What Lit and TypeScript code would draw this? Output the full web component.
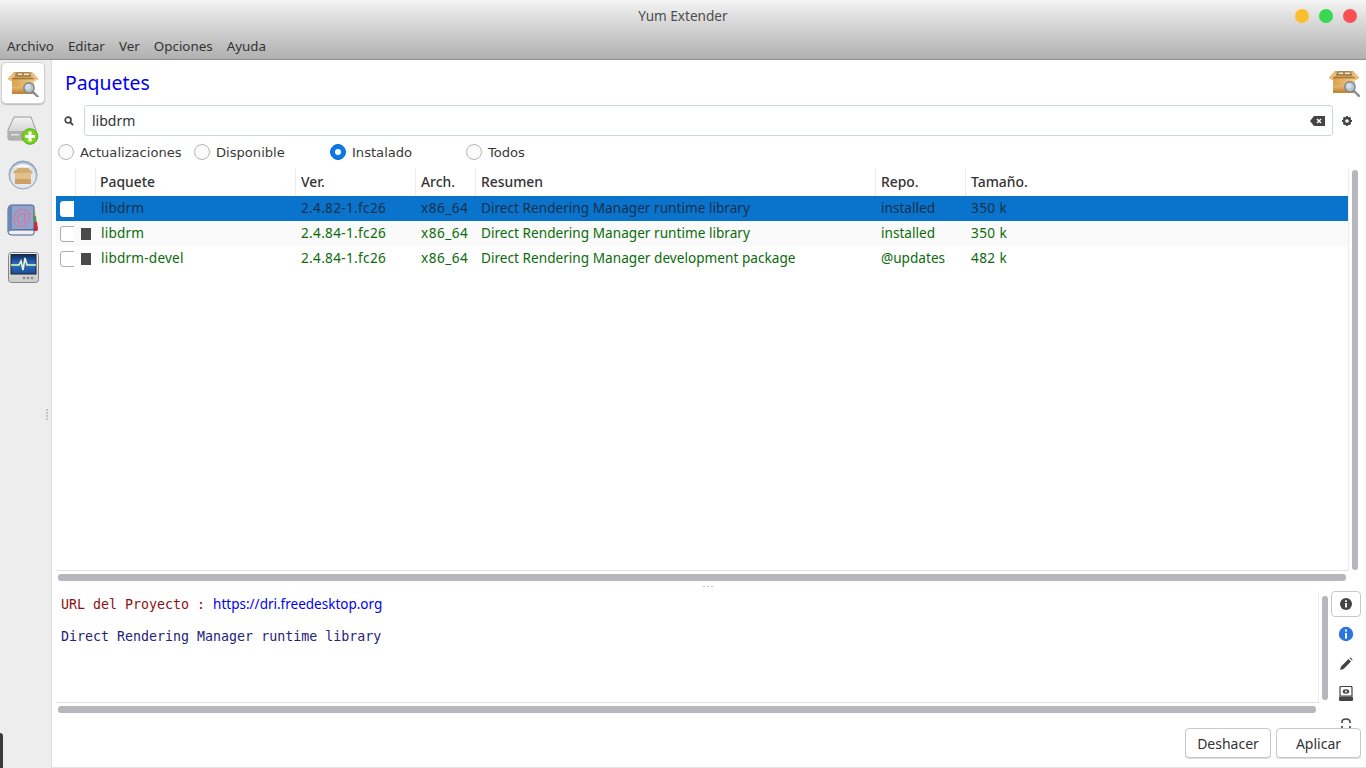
import { LitElement, html, css, svg } from "lit";
import { customElement } from "lit/decorators.js";

const box = (id: string, w: number, lens = true) => html`<svg width=${w} height=${w * 0.9} viewBox="0 0 32 29">
  <defs>
    <linearGradient id="b${id}" x1="0" y1="0" x2="0" y2="1"><stop offset="0" stop-color="#e8bb72"/><stop offset="1" stop-color="#b97c2a"/></linearGradient>
    <linearGradient id="f${id}" x1="0" y1="0" x2="1" y2="0"><stop offset="0" stop-color="#d9a04e"/><stop offset="1" stop-color="#f0cc8a"/></linearGradient>
  </defs>
  <path d="M7 3 L25 3 L31.5 10 L27 12 L5 12 L.5 10Z" fill="#d3a45e"/>
  <path d="M10 3 H22 L25 8 H7Z" fill="#a88755"/>
  <path d="M11 4.5 h4 v1.6 h-4z M17 4.5 h5 v1.6 h-5z" fill="#f2e6cf"/>
  <path d="M.5 10 L7 3 L8 7 L4 12Z M31.5 10 L25 3 L24 7 L28 12Z" fill="#e8bf7c"/>
  <rect x="5" y="9" width="22" height="16" fill="url(#f${id})"/>
  <rect x="5" y="18" width="22" height="7" fill="url(#b${id})"/>
  <rect x="5" y="9" width="22" height="1.4" fill="#a8742e"/>
  ${lens ? svg`<path d="M25 22 L31 28" stroke="#8a8f96" stroke-width="2.4" stroke-linecap="round"/>
  <circle cx="22" cy="19" r="5.2" fill="#b8c4d0" stroke="#7d858e" stroke-width="1.4"/>
  <circle cx="21" cy="18" r="2.8" fill="#d5dde6"/>` : ""}
</svg>`;

const disk = html`<svg width="32" height="31" viewBox="0 0 32 31">
  <defs>
    <linearGradient id="dk" x1="0" y1="0" x2="0" y2="1"><stop offset="0" stop-color="#f2f2f2"/><stop offset="1" stop-color="#c4c4c4"/></linearGradient>
  </defs>
  <path d="M7 3 H24 L29 16 V24 Q29 26 27 26 H3 Q1 26 1 24 V16Z" fill="url(#dk)" stroke="#9a9a9a"/>
  <rect x="1.5" y="17" width="27" height="8.5" rx="1.5" fill="#b0b0b0"/>
  <rect x="4" y="20" width="8" height="1.5" fill="#e6e6e6"/>
  <circle cx="23" cy="22.5" r="7.8" fill="#76d21b" stroke="#5cb012"/>
  <path d="M23 17.5 V27.5 M18 22.5 H28" stroke="#fff" stroke-width="3.2"/>
</svg>`;

const globe = html`<svg width="30" height="30" viewBox="0 0 30 30">
  <defs>
    <radialGradient id="gl" cx=".5" cy=".55" r=".55"><stop offset="0" stop-color="#f6f6f8"/><stop offset=".78" stop-color="#dfe4ea"/><stop offset="1" stop-color="#7f95b8"/></radialGradient>
  </defs>
  <circle cx="15" cy="15" r="14" fill="url(#gl)" stroke="#8fa1bc"/>
  <path d="M5 12 L10 8 H20 L25 12 L23 14 H7Z" fill="#d4ab70"/>
  <rect x="7" y="13" width="16" height="11" fill="#e3c08a"/>
  <rect x="7" y="19" width="16" height="5" fill="#cda165"/>
  <path d="M5 8 Q15 1 25 8 Q15 5 5 8Z" fill="#fff" opacity=".85"/>
</svg>`;

const book = html`<svg width="34" height="34" viewBox="0 0 34 34">
  <path d="M26 6 h3 l1 10 h-3z" fill="#d9c23b"/>
  <path d="M27 12 h3 l1 8 h-3z" fill="#5aa13a"/>
  <path d="M27 18 h4 l1 7 q0 2-2 2 h-3z" fill="#d8262c"/>
  <path d="M6 1 H26 Q28 1 28 3 V24 Q28 26 26 26 H6 L2 28 V6 Q2 1 6 1Z" fill="#8fa5cf" stroke="#4c5f8e"/>
  <path d="M2 28 Q2 26 6 26 H28 V29 Q28 31 26 31 H6 Q2 31 2 28Z" fill="#eef0f4" stroke="#4c5f8e"/>
  <path d="M2 6 Q2 1 6 1 V26 L2 28Z" fill="#6f86b6"/>
  <text x="16.5" y="20" text-anchor="middle" class="at">@</text>
</svg>`;

const monitor = html`<svg width="31" height="31" viewBox="0 0 31 31">
  <defs>
    <linearGradient id="scr" x1="0" y1="0" x2="0" y2="1"><stop offset="0" stop-color="#0d2a66"/><stop offset=".5" stop-color="#2b6fc0"/><stop offset="1" stop-color="#1c4c96"/></linearGradient>
    <linearGradient id="fr" x1="0" y1="0" x2="0" y2="1"><stop offset="0" stop-color="#f2f2f2"/><stop offset="1" stop-color="#cbcbcb"/></linearGradient>
  </defs>
  <rect x=".5" y=".5" width="30" height="30" rx="3" fill="url(#fr)" stroke="#858585"/>
  <rect x="3" y="2.5" width="25" height="19.5" fill="url(#scr)" stroke="#222"/>
  <path d="M3 13 H11 L13 9 L15 18 L17 6 L19 13 H28" stroke="#e6f7c0" stroke-width="1.6" fill="none"/>
  <circle cx="16" cy="26" r="1.3" fill="#8b8b8b"/><circle cx="20" cy="26" r="1.3" fill="#8b8b8b"/><circle cx="24" cy="26" r="1.3" fill="#8b8b8b"/>
</svg>`;

const rows = [
  { sel: true, dot: false, name: "libdrm", ver: "2.4.82-1.fc26", sum: "Direct Rendering Manager runtime library", repo: "installed", size: "350 k" },
  { sel: false, dot: true, name: "libdrm", ver: "2.4.84-1.fc26", sum: "Direct Rendering Manager runtime library", repo: "installed", size: "350 k" },
  { sel: false, dot: true, name: "libdrm-devel", ver: "2.4.84-1.fc26", sum: "Direct Rendering Manager development package", repo: "@updates", size: "482 k" },
];

@customElement("app-root")
export class AppRoot extends LitElement {
  static styles = css`
    :host { display: flex; flex-direction: column; width: 1366px; height: 768px; overflow: hidden; position: relative; background: #fff; font-family: "Noto Sans", sans-serif; font-size: 13.6px; color: #2e3436; }
    .header { height: 60px; flex: none; box-sizing: border-box; border-bottom: 1px solid #8f8f8f; background: linear-gradient(#f4f4f4, #dedede 30%, #b0b0b0); display: flex; flex-direction: column; }
    .titlebar { height: 31px; flex: none; display: flex; align-items: center; justify-content: center; position: relative; color: #4d4d4d; font-size: 13.6px; }
    .lights { position: absolute; right: 9px; top: 9px; display: flex; gap: 10px; }
    .light { width: 14px; height: 14px; border-radius: 50%; }
    .menu { display: flex; padding: 2px 0 0 7px; gap: 14px; font-size: 13.4px; color: #333; height: 28px; box-sizing: border-box; align-items: center; }
    .body { flex: 1; display: flex; min-height: 0; }
    .side { flex: none; box-sizing: border-box; background: #ededed; border-right: 1px solid #dcdcdc; width: 52px; display: flex; flex-direction: column; align-items: flex-start; padding: 2px 0 0 1px; position: relative; }
    .sbtn { width: 44px; height: 42px; margin-bottom: 4px; display: flex; align-items: center; justify-content: center; box-sizing: border-box; flex: none; }
    .sbtn.on { background: #fff; border: 1px solid #cfcfcf; border-radius: 5px; box-shadow: 0 1px 1px #bbb; }
    .at { font: 20px "Liberation Sans", sans-serif; fill: #d17ba0; }
    .grip { position: absolute; right: 3px; top: 349px; display: flex; flex-direction: column; gap: 1px; }
    .grip i { width: 2px; height: 2px; background: #c4c4c4; display: block; }
    .main { flex: 1; display: flex; flex-direction: column; min-width: 0; position: relative; }
    .title { height: 45px; flex: none; display: flex; align-items: center; justify-content: space-between; padding: 0 6px 0 13px; font-size: 19.4px; color: #0000ee; box-sizing: border-box; }
    .search { height: 31px; flex: none; display: flex; align-items: center; }
    .sicon { width: 32px; padding-left: 2px; box-sizing: border-box; display: flex; justify-content: center; flex: none; }
    .entry { flex: none; width: 1249px; height: 31px; box-sizing: border-box; border: 1px solid #cdd5e3; border-radius: 3px; padding: 0 7px; display: flex; align-items: center; justify-content: space-between; font-size: 14px; color: #2e3436; }
    .gear { flex: none; margin-left: 9px; display: flex; }
    .radios { height: 32px; flex: none; display: grid; grid-template-columns: 136px 136px 136px 100px; padding-left: 6px; align-items: center; font-family: "DejaVu Sans", sans-serif; font-size: 13.1px; color: #3a3a3a; }
    .radio { display: flex; align-items: center; gap: 6px; }
    .rb { width: 14px; height: 14px; border: 1px solid #b5b5b5; border-radius: 50%; background: #fbfbfb; flex: none; }
    .rb.on { background: #0a7ae6; border-color: #0a6ac8; position: relative; display: flex; align-items: center; justify-content: center; }
    .rb.on::after { content: ""; width: 6px; height: 6px; border-radius: 50%; background: #fff; }
    .treewrap { height: 403px; width: 1293px; flex: none; display: flex; box-sizing: border-box; margin-left: 4px; border-bottom: 1px solid #e0e0e8; border-right: 1px solid #ececf0; position: relative; }
    .tree { flex: none; width: 1292px; }
    .grid { display: grid; grid-template-columns: 19px 20px 200px 120px 60px 400px 90px 1fr; align-items: center; }
    .thead { height: 28px; font-weight: 500; color: #333; font-size: 13.9px; }
    .thead > div { height: 28px; display: flex; align-items: center; border-left: 1px solid #ececec; padding: 0 0 2px 4px; box-sizing: border-box; }
    .thead > div:first-child { border-left: 0; }
    .thead > .ind { padding-left: 5px; }
    .row { height: 25px; color: #0b6b0b; align-items: stretch; }
    .row > div { padding: 0 0 2px 6px; white-space: nowrap; overflow: hidden; display: flex; align-items: center; }
    .row:nth-child(3) { background: #fafafa; }
    .row.sel { background: #0a74cd; color: #16304a; }
    .row > .c0 { padding: 0 0 0 4px; margin-right: 1px; }
    .row > .c1 { padding: 0 0 0 6px; }
    .row > .name { letter-spacing: .2px; }
    .row > .ver { letter-spacing: .32px; }
    .row > .arch { letter-spacing: .5px; }
    .row > .sum { letter-spacing: .02px; }
    .row > .size { letter-spacing: .4px; }
    .cb { width: 16px; height: 14px; border: 1px solid #adadad; border-radius: 3px; background: #fff; flex: none; }
    .sel .cb { border-color: #fff; }
    .sq { width: 10px; height: 12px; background: #4a4a4a; flex: none; }
    .vs { position: absolute; width: 6px; border-radius: 3px; background: #b6b6bc; }
    .hs { height: 7px; border-radius: 3px; background: #b6b6bc; margin-left: 6px; flex: none; }
    .handle { height: 11px; flex: none; display: flex; justify-content: center; align-items: center; gap: 1px; padding-right: 3px; }
    .handle i { width: 2px; height: 1px; background: #c4c4c4; display: block; margin-left: 1px; }
    .detail { height: 111px; width: 1263px; flex: none; margin-left: 4px; border-bottom: 1px solid #e0e0e8; border-right: 1px solid #eee; box-sizing: border-box; position: relative; padding: 3px 0 0 5px; font-family: "DejaVu Sans Mono", monospace; font-size: 13.3px; line-height: 19px; }
    .url { color: #8b1010; display: flex; align-items: baseline; white-space: pre; }
    .url a { color: #0000ee; font-family: "Noto Sans", sans-serif; font-size: 13.5px; }
    .desc { color: #23237a; margin-top: 13px; }
    .tabs { position: absolute; right: 5px; top: 531px; width: 30px; display: flex; flex-direction: column; align-items: center; height: 137px; overflow: hidden; }
    .tab { width: 30px; height: 30px; flex: none; display: flex; align-items: center; justify-content: center; box-sizing: border-box; }
    .tab.on { border: 1px solid #c8c8c8; border-radius: 4px; height: 26px; margin-bottom: 2px; }
    .tab.cut { align-items: flex-start; padding-top: 9px; }
    .actions { flex: 1; display: flex; justify-content: flex-end; align-items: flex-start; gap: 5px; padding: 15px 5px 0 0; min-height: 0; border-bottom: 1px solid #e4e4e8; }
    .btn { height: 30px; width: 86px; box-sizing: border-box; border: 1px solid #c9c9c9; border-radius: 4px; background: #fff; box-shadow: 0 1px 0 #ddd; display: flex; align-items: center; justify-content: center; font-size: 14px; color: #333; }
    .btn.ap { width: 85px; }
    .corner { position: absolute; left: 0; top: 673px; width: 3px; height: 40px; background: #3a3a3a; border-top-right-radius: 3px; }
  `;

  render() {
    return html`
      <div class="header">
        <div class="titlebar">Yum Extender
          <div class="lights">
            <span class="light" style="background:#fdbe2e"></span>
            <span class="light" style="background:#36d94f"></span>
            <span class="light" style="background:#f94f55"></span>
          </div>
        </div>
        <div class="menu"><span>Archivo</span><span>Editar</span><span>Ver</span><span>Opciones</span><span>Ayuda</span></div>
      </div>
      <div class="body">
        <div class="side">
          <div class="sbtn on">${box("a", 32)}</div>
          <div class="sbtn">${disk}</div>
          <div class="sbtn">${globe}</div>
          <div class="sbtn">${book}</div>
          <div class="sbtn">${monitor}</div>
          <div class="grip"><i></i><i></i><i></i><i></i></div>
          <div class="corner"></div>
        </div>
        <div class="main">
          <div class="title"><span>Paquetes</span>${box("b", 32)}</div>
          <div class="search">
            <div class="sicon"><svg width="10" height="10" viewBox="0 0 11 11"><circle cx="4.5" cy="4.5" r="3.2" fill="none" stroke="#444" stroke-width="1.8"/><path d="M7 7 L10 10" stroke="#444" stroke-width="2"/></svg></div>
            <div class="entry"><span>libdrm</span>
              <svg width="15" height="10" viewBox="0 0 15 10"><path d="M4 0 H15 V10 H4 L0 5Z" fill="#444"/><path d="M7 3 L11 7 M11 3 L7 7" stroke="#fff" stroke-width="1.4"/></svg>
            </div>
            <div class="gear"><svg width="10" height="10" viewBox="0 0 12 12"><circle cx="6" cy="6" r="3.6" fill="none" stroke="#444" stroke-width="2.8"/><path d="M6 0 V2.5 M6 9.5 V12 M0 6 H2.5 M9.5 6 H12 M1.8 1.8 L3.4 3.4 M8.6 8.6 L10.2 10.2 M1.8 10.2 L3.4 8.6 M8.6 3.4 L10.2 1.8" stroke="#444" stroke-width="2.2"/></svg></div>
          </div>
          <div class="radios">
            <div class="radio"><span class="rb"></span>Actualizaciones</div>
            <div class="radio"><span class="rb"></span>Disponible</div>
            <div class="radio"><span class="rb on"></span>Instalado</div>
            <div class="radio"><span class="rb"></span>Todos</div>
          </div>
          <div class="treewrap">
            <div class="tree">
              <div class="grid thead"><div></div><div></div><div>Paquete</div><div class="ind">Ver.</div><div class="ind">Arch.</div><div class="ind">Resumen</div><div class="ind">Repo.</div><div class="ind">Tamaño.</div></div>
              ${rows.map((r) => html`<div class="grid row ${r.sel ? "sel" : ""}">
                <div class="c0"><span class="cb"></span></div>
                <div class="c1">${r.dot ? html`<span class="sq"></span>` : ""}</div>
                <div class="name">${r.name}</div><div class="ver">${r.ver}</div><div class="arch">x86_64</div><div class="sum">${r.sum}</div><div>${r.repo}</div><div class="size">${r.size}</div>
              </div>`)}
            </div>
            <div class="vs" style="left:1296px;top:2px;height:400px"></div>
          </div>
          <div class="hs" style="width:1288px;margin-top:3px"></div>
          <div class="handle"><i></i><i></i><i></i></div>
          <div class="detail">
            <div class="url">URL del Proyecto : <a>https://dri.freedesktop.org</a></div>
            <div class="desc">Direct Rendering Manager runtime library</div>
            <div class="vs" style="left:1266px;top:4px;height:104px"></div>
          </div>
          <div class="hs" style="width:1258px;margin-top:3px"></div>
          <div class="tabs">
            <div class="tab on"><svg width="14" height="14" viewBox="0 0 14 14"><circle cx="7" cy="7" r="6" fill="#444"/><path d="M7 6 V10.5 M7 3.2 V5" stroke="#fff" stroke-width="1.8"/></svg></div>
            <div class="tab"><svg width="16" height="16" viewBox="0 0 16 16"><circle cx="8" cy="8" r="7.2" fill="#2a76dc"/><path d="M8 7 V12.5 M8 3.5 V5.6" stroke="#fff" stroke-width="2"/></svg></div>
            <div class="tab"><svg width="14" height="14" viewBox="0 0 14 14"><path d="M1 13 L2 9.5 L9.5 2 L12 4.5 L4.5 12Z M10.5 1 L11.5 .5 L13.5 2.5 L13 3.5Z" fill="#444"/></svg></div>
            <div class="tab"><svg width="16" height="16" viewBox="0 0 16 16"><path d="M2 1.5 Q2 .5 3 .5 H13 Q14 .5 14 1.5 V10 H2Z" fill="none" stroke="#444" stroke-width="1.2"/><ellipse cx="8" cy="5.5" rx="3.2" ry="2.2" fill="#444"/><circle cx="8" cy="5.5" r="1" fill="#fff"/><rect x="1" y="10.5" width="14" height="4.5" rx="1" fill="#444"/></svg></div>
            <div class="tab cut"><svg width="12" height="14" viewBox="0 0 12 14"><path d="M2 5 V4 Q2 1 6 1 Q10 1 10 4 V5 M2 8 V10 M10 8 V10" fill="none" stroke="#444" stroke-width="1.6"/></svg></div>
          </div>
          <div class="actions"><div class="btn">Deshacer</div><div class="btn ap">Aplicar</div></div>
        </div>
      </div>
    `;
  }
}
